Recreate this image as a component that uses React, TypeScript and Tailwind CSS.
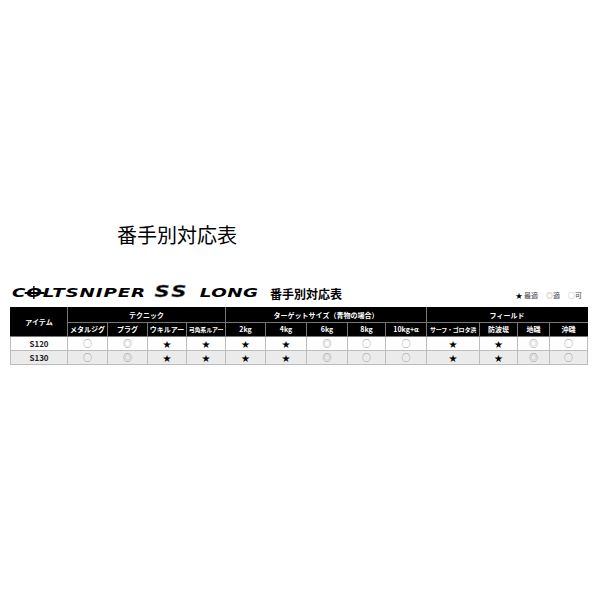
import React from "react";

const widths = [57, 40, 40, 39, 39, 40, 41, 41, 38, 41, 53, 38, 32, 38];
const sub = ["メタルジグ", "プラグ", "ウキルアー", "弓角系ルアー", "2kg", "4kg", "6kg", "8kg", "10kg+α", "サーフ・ゴロタ浜", "防波堤", "地磯", "沖磯"];
const row = ["○", "◎", "★", "★", "★", "★", "◎", "○", "○", "★", "★", "◎", "○"];
const rows = [
  { name: "S120", vals: row, bg: "bg-white" },
  { name: "S130", vals: row, bg: "bg-[#ebebeb]" },
];

function Sym({ s }: { s: string }) {
  if (s === "★") return <span className="text-black text-[8px]">★</span>;
  return <span className="text-[#a0a0a0] text-[9px]">{s}</span>;
}

export default function App() {
  return (
    <div
      className="w-[600px] h-[600px] bg-white pt-[221px]"
      style={{ fontFamily: '"Noto Sans CJK JP", "Liberation Sans", sans-serif' }}
    >
      <div className="pl-[117px] text-[20px] leading-[28px] font-normal text-black">番手別対応表</div>
      <div className="mt-[36px] pl-[12px] pr-[18px] flex items-end h-[16px]">
        <div className="w-[250px] shrink-0 h-[16px]">
          <div
            className="origin-left scale-x-[1.41] flex items-end italic font-black text-[13px] leading-[15px] text-black tracking-[0.6px] whitespace-nowrap"
            style={{ fontFamily: '"DejaVu Sans", sans-serif' }}
          >
            <span>C</span>
            <span className="relative">
              O
              <span className="absolute left-[-1px] right-[-1px] top-[7px] h-[1.5px] bg-black"></span>
              <span className="absolute left-[4.5px] top-[1px] h-[13px] w-[1.5px] bg-black"></span>
            </span>
            <span>LTSNIPER</span>
            <span className="ml-[6px] text-[15px] leading-[15px] italic font-black tracking-[1.5px] text-black" style={{ WebkitTextStroke: "0.4px #777" }}>SS</span>
            <span className="ml-[8px] tracking-[0.3px]">LONG</span>
          </div>
        </div>
        <div className="ml-[8px] text-[12px] leading-[15px] font-bold text-black">番手別対応表</div>
        <div className="ml-auto text-[7px] leading-[10px] text-[#444] flex gap-[8px] mb-[1px]">
          <span><span className="text-black">★</span> 最適</span>
          <span><span className="text-[#999]">◎</span>適</span>
          <span><span className="text-[#999]">○</span>可</span>
        </div>
      </div>
      <div className="mt-[6px] pl-[10px]">
        <table className="border-collapse table-fixed text-[7px] font-bold" style={{ width: 577 }}>
          <colgroup>
            {widths.map((w, i) => (
              <col key={i} style={{ width: w }} />
            ))}
          </colgroup>
          <thead>
            <tr className="h-[15px] bg-black text-white">
              <th rowSpan={2} className="border border-[#777] border-l-black border-t-black p-0 font-bold">アイテム</th>
              <th colSpan={4} className="border border-[#777] border-t-black p-0 font-bold">テクニック</th>
              <th colSpan={5} className="border border-[#777] border-t-black p-0 font-bold">ターゲットサイズ（青物の場合）</th>
              <th colSpan={4} className="border border-[#777] border-t-black border-r-black p-0 font-bold">フィールド</th>
            </tr>
            <tr className="h-[14px] bg-black text-white">
              {sub.map((s, i) => (
                <th
                  key={i}
                  className={`border border-[#777] p-0 font-bold whitespace-nowrap ${i === 3 || i === 9 ? "text-[6px] tracking-[-0.2px]" : ""} ${i === sub.length - 1 ? "border-r-black" : ""}`}
                >
                  {s}
                </th>
              ))}
            </tr>
          </thead>
          <tbody>
            {rows.map((r) => (
              <tr key={r.name} className={`h-[14px] ${r.bg}`}>
                <td className="border border-[#bdbdbd] p-0 text-center text-[8px] text-[#222] font-bold">{r.name}</td>
                {r.vals.map((v, i) => (
                  <td key={i} className="border border-[#bdbdbd] p-0 text-center leading-[12px]">
                    <Sym s={v} />
                  </td>
                ))}
              </tr>
            ))}
          </tbody>
        </table>
      </div>
    </div>
  );
}
